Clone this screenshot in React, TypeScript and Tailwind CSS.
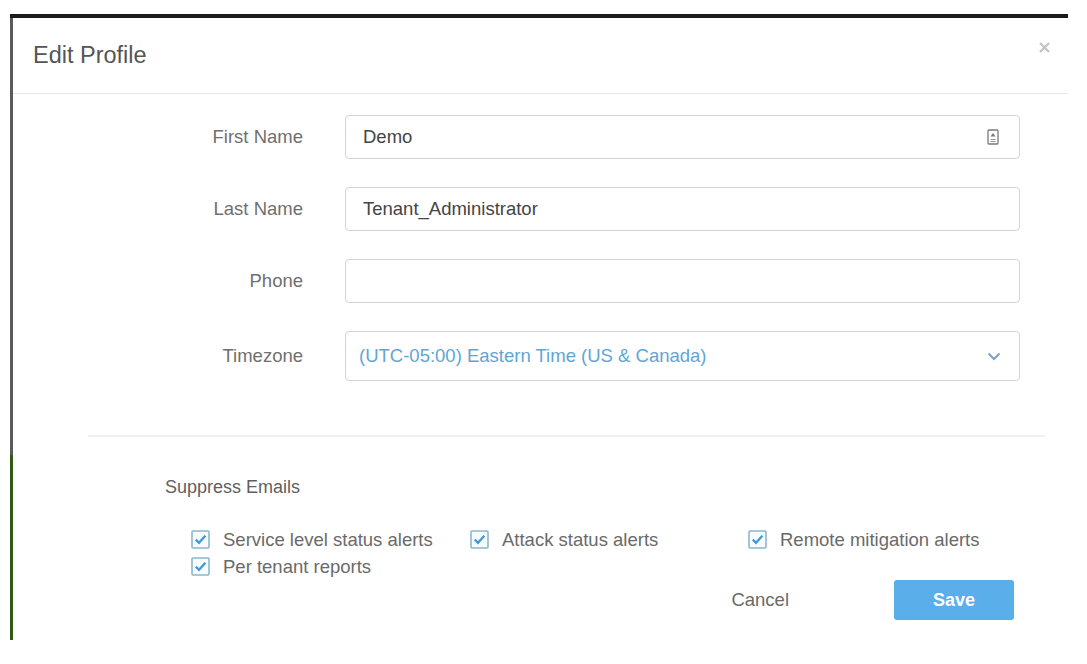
import React from "react";

const font = { fontFamily: '"Liberation Sans", Arial, sans-serif' };

function Check() {
  return (
    <svg width="19" height="19" viewBox="0 0 19 19" className="shrink-0">
      <rect x="1" y="1" width="17" height="17" rx="1" fill="#f7fbfd" stroke="#8ab8cb" strokeWidth="1.6" />
      <path d="M4.8 9.6 L8 12.8 L14.4 5.8" fill="none" stroke="#3f9ad6" strokeWidth="2.3" />
    </svg>
  );
}

function CheckItem({ label }: { label: string }) {
  return (
    <div className="flex items-center h-[27px] gap-[13px]">
      <Check />
      <span className="text-[18.5px] text-[#6a6a6a]">{label}</span>
    </div>
  );
}

function Row({ label, children, h = "h-[44px]" }: { label: string; children: React.ReactNode; h?: string }) {
  return (
    <div className={`flex items-center ${h}`}>
      <div className="w-[290px] text-right text-[18.5px] text-[#6f6f6f] shrink-0">{label}</div>
      <div className="ml-[42px] w-[675px] h-full">{children}</div>
    </div>
  );
}

export default function App() {
  return (
    <div className="w-[1087px] h-[664px] bg-white overflow-hidden pt-[14px] pl-[10px]" style={font}>
      <div className="w-[1058px] h-[626px] border-t-4 border-[#1b1b1b] flex bg-white">
        <div className="w-[3px] flex flex-col shrink-0">
          <div className="h-[437px] bg-[#5a5a5a]" />
          <div className="flex-1 bg-[#2f5a12]" />
        </div>
        <div className="flex-1 flex flex-col">
          <div className="h-[76px] flex items-center justify-between border-b border-[#e6e6e6] pl-[20px] pr-[17px]">
            <span className="text-[23.5px] text-[#555]">Edit Profile</span>
            <svg width="13" height="13" viewBox="0 0 13 13" className="-mt-[17px]">
              <path d="M2 2 L11 11 M11 2 L2 11" stroke="#c4c4c4" strokeWidth="2.4" />
            </svg>
          </div>

          <div className="flex flex-col gap-[28px] pt-[21px]">
            <Row label="First Name">
              <div className="h-full flex items-center justify-between border border-[#d4d4d4] rounded-[4px] pl-[17px] pr-[20px] text-[18.5px] text-[#444]">
                <span>Demo</span>
                <svg width="12" height="16" viewBox="0 0 12 16">
                  <rect x="1" y="1" width="10" height="14" rx="1" fill="none" stroke="#7a7a7a" strokeWidth="1.3" />
                  <path d="M6 4 L8.5 7.5 L3.5 7.5 Z" fill="#7a7a7a" />
                  <path d="M3.5 10.5 H8.5 M3.5 12.5 H8.5" stroke="#9a9a9a" strokeWidth="1" />
                </svg>
              </div>
            </Row>
            <Row label="Last Name">
              <div className="h-full flex items-center border border-[#d4d4d4] rounded-[4px] pl-[17px] text-[18.5px] text-[#444]">
                Tenant_Administrator
              </div>
            </Row>
            <Row label="Phone">
              <div className="h-full border border-[#d4d4d4] rounded-[4px]" />
            </Row>
            <Row label="Timezone" h="h-[50px]">
              <div className="h-full flex items-center justify-between border border-[#d4d4d4] rounded-[4px] pl-[13px] pr-[18px] text-[18.5px] text-[#5fa6d6]">
                <span>(UTC-05:00) Eastern Time (US &amp; Canada)</span>
                <svg width="14" height="9" viewBox="0 0 14 9">
                  <path d="M1.5 1.5 L7 7 L12.5 1.5" fill="none" stroke="#7f9fbf" strokeWidth="2" />
                </svg>
              </div>
            </Row>
          </div>

          <div className="mt-[54px] ml-[75px] mr-[23px] h-[2px] bg-[#f0f0f0]" />

          <div className="mt-[40px] pl-[152px] text-[18px] text-[#5f5f5f] leading-[21px]">Suppress Emails</div>

          <div className="mt-[28px] pl-[178px] grid grid-cols-[279px_278px_auto]">
            <CheckItem label="Service level status alerts" />
            <CheckItem label="Attack status alerts" />
            <CheckItem label="Remote mitigation alerts" />
            <CheckItem label="Per tenant reports" />
          </div>

          <div className="flex items-center justify-end pr-[54px]">
            <span className="text-[18.5px] text-[#6a6a6a] mr-[105px]">Cancel</span>
            <button className="w-[120px] h-[40px] rounded-[3px] bg-[#5aaeea] text-white font-bold text-[18px]">Save</button>
          </div>
        </div>
      </div>
    </div>
  );
}
